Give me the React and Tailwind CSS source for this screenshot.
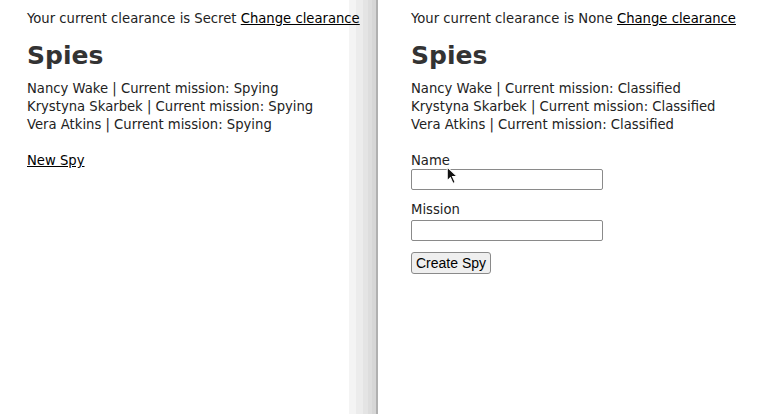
import React from 'react';

const SPIES = ['Nancy Wake', 'Krystyna Skarbek', 'Vera Atkins'];

const SpyList = ({ mission }) => (
    <div className="mt-[8px] leading-[18px]">
        {SPIES.map(name => (
            <div key={name}>{name} | Current mission: {mission}</div>
        ))}
    </div>
);

const Header = ({ clearance }) => (
    <>
        <div className="leading-[18px] whitespace-nowrap">
            Your current clearance is {clearance} <a href="#" className="underline text-black">Change clearance</a>
        </div>
        <h1 className="mt-[12px] text-[25px] leading-[32px] font-bold text-[#333]">Spies</h1>
    </>
);

const Cursor = () => (
    <svg className="absolute left-[446px] top-[166px]" width="13" height="19" viewBox="0 0 12 18">
        <path d="M1 1 L1 14 L4 11 L6.5 16.5 L8.5 15.5 L6 10 L10.5 10 Z" fill="#111" stroke="#fff" strokeWidth="1" />
    </svg>
);

export default function App() {
    return (
        <div className="relative flex w-[780px] h-[414px] bg-white text-[13.2px] text-[#222] font-['DejaVu_Sans',Verdana,sans-serif] overflow-hidden">
            <div className="relative z-10 w-[349px] shrink-0 pl-[27px] pt-[10px]">
                <Header clearance="Secret" />
                <SpyList mission="Spying" />
                <div className="mt-[18px] leading-[18px]">
                    <a href="#" className="underline text-black">New Spy</a>
                </div>
            </div>
            <div className="flex w-[29px] shrink-0 h-full">
                <div className="w-[7px] bg-[#f4f4f4]" />
                <div className="w-[7px] bg-[#ececec]" />
                <div className="w-[5px] bg-[#e4e4e4]" />
                <div className="w-[4px] bg-[#dddddd]" />
                <div className="w-[4px] bg-[#d6d6d6]" />
                <div className="w-[2px] bg-[#b0b0b0]" />
            </div>
            <div className="flex-1 pl-[33px] pt-[10px]">
                <Header clearance="None" />
                <SpyList mission="Classified" />
                <div className="mt-[18px] leading-[18px]">Name</div>
                <input type="text" className="block mt-[-1px] w-[192px] h-[21px] border border-[#8a8a8a] rounded-[2px] bg-white" />
                <div className="mt-[11px] leading-[18px]">Mission</div>
                <input type="text" className="block mt-[1px] w-[192px] h-[21px] border border-[#8a8a8a] rounded-[2px] bg-white" />
                <button className="block mt-[11px] w-[80px] h-[22px] border border-[#8a8a8a] rounded-[3px] bg-[#efefef] text-black text-[14px] font-['Liberation_Sans',Arial,sans-serif] leading-[18px]">
                    Create Spy
                </button>
            </div>
            <Cursor />
        </div>
    );
}
